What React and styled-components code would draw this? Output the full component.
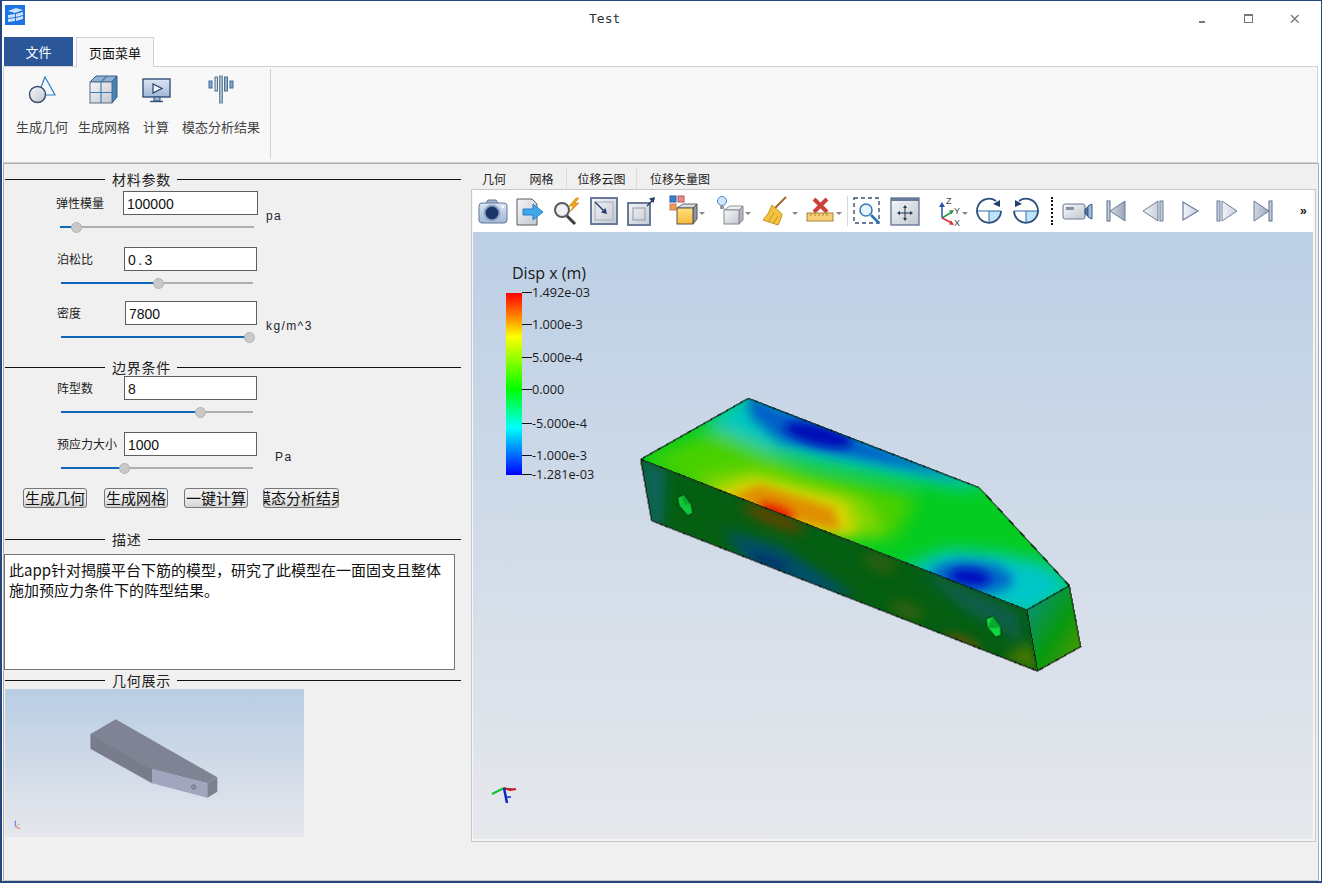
import React from "react";
import styled, { createGlobalStyle } from "styled-components";

const cjk = `"Noto Sans CJK SC", "Noto Sans", sans-serif`;

const Global = createGlobalStyle`
  html, body { margin: 0; padding: 0; background: #fff; overflow: hidden; }
  * { box-sizing: border-box; }
`;

const Win = styled.div`
  width: 1322px;
  height: 883px;
  border: 1px solid #24467c;
  border-bottom-width: 2px;
  border-left-width: 2px;
  background: #fff;
  display: flex;
  flex-direction: column;
  font-family: ${cjk};
  color: #111;
`;

const TitleBar = styled.div`
  height: 36px;
  flex: none;
  position: relative;
  display: flex;
  align-items: center;
  justify-content: flex-end;
`;

const AppLogo = styled.svg`
  position: absolute;
  left: 3px;
  top: 4px;
`;

const TitleText = styled.div`
  position: absolute;
  left: 587px;
  top: 10px;
  font: 13px "DejaVu Sans Mono", monospace;
  color: #333;
`;

const WinBtn = styled.div`
  width: 46px;
  height: 36px;
  display: flex;
  align-items: center;
  justify-content: center;
`;

const WinBtns = styled.div`
  display: flex;
  margin-right: 3px;
`;

const TabRow = styled.div`
  height: 30px;
  flex: none;
  display: flex;
  align-items: flex-end;
  padding-left: 2px;
  gap: 3px;
  margin-bottom: -1px;
`;

const FileTab = styled.div`
  width: 69px;
  height: 29px;
  margin-bottom: 1px;
  background: #2b579a;
  color: #fff;
  font-size: 13px;
  display: flex;
  align-items: center;
  justify-content: center;
`;

const PageTab = styled.div`
  width: 78px;
  height: 30px;
  background: #f8f8f8;
  border: 1px solid #d2d2d2;
  border-bottom: none;
  font-size: 13px;
  display: flex;
  align-items: center;
  justify-content: center;
  position: relative;
  z-index: 1;
`;

const Ribbon = styled.div`
  height: 97px;
  flex: none;
  margin: 0 3px 0 1px;
  background: #f8f8f8;
  border: 1px solid #d2d2d2;
  display: flex;
  padding: 2px 0 3px;
`;

const RibbonGroup = styled.div`
  width: 267px;
  border-right: 1px solid #d2d2d2;
  display: flex;
  padding-left: 7px;
`;

const RibbonBtn = styled.div`
  width: ${(p) => p.$w}px;
  display: flex;
  flex-direction: column;
  align-items: center;
  padding-top: 5px;
  font-size: 13px;
  line-height: 19px;
  color: #444;
  white-space: nowrap;
  svg { margin-bottom: 11px; }
`;

const Main = styled.div`
  flex: 1;
  margin: 0 2px 0 1px;
  background: #f0f0f0;
  border: 1px solid #adadad;
  border-bottom-color: #c8c8c8;
  display: flex;
  min-height: 0;
`;

const Left = styled.div`
  width: 467px;
  flex: none;
  padding-top: 7px;
  display: flex;
  flex-direction: column;
`;

const SectionHead = styled.div`
  height: 16px;
  flex: none;
  width: 456px;
  margin-left: 1px;
  margin-top: ${(p) => p.$top || 0}px;
  display: flex;
  align-items: center;
  font-size: 14px;
  letter-spacing: 0.75px;
  color: #222;
  &::before, &::after { content: ""; height: 1px; background: #111; }
  &::before { width: 100px; margin-right: 7px; }
  &::after { flex: 1; margin-left: 6px; }
`;

const Field = styled.div`
  margin-top: ${(p) => p.$top}px;
  padding-left: ${(p) => p.$left}px;
  display: flex;
  flex-direction: column;
`;

const FieldRow = styled.div`
  display: flex;
  height: 24px;
`;

const FieldLabel = styled.div`
  width: ${(p) => p.$w}px;
  font-size: 12px;
  line-height: 24px;
  color: #222;
  white-space: nowrap;
`;

const FieldInput = styled.input`
  width: ${(p) => p.$w}px;
  height: 24px;
  border: 1px solid #5e5e5e;
  background: #fff;
  padding: 1px 0 0 3px;
  font: 14px "Liberation Sans", sans-serif;
  color: #111;
  outline: none;
  letter-spacing: ${(p) => p.$track || 0}px;
`;

const Unit = styled.div`
  margin-left: ${(p) => p.$gap}px;
  padding-top: 18px;
  font: 12px "Liberation Sans", sans-serif;
  letter-spacing: 1.4px;
  color: #223;
  white-space: nowrap;
`;

const Slider = styled.div`
  width: ${(p) => p.$w}px;
  margin: 6px 0 0 ${(p) => p.$x}px;
  height: 12px;
  position: relative;
  display: flex;
  align-items: center;
`;

const Track = styled.div`
  height: 2px;
  width: 100%;
  background: #aeaeae;
`;

const Fill = styled.div`
  height: 100%;
  background: #0f67b9;
`;

const Knob = styled.div`
  position: absolute;
  top: 1px;
  width: 11px;
  height: 11px;
  margin-left: -5px;
  border-radius: 50%;
  background: #c9c9c9;
  border: 1px solid #b2b2b2;
`;

const Buttons = styled.div`
  display: flex;
  margin: 14px 0 0 19px;
`;

const PushBtn = styled.div`
  width: ${(p) => p.$w}px;
  margin-right: ${(p) => p.$gap}px;
  height: 20px;
  border: 1px solid #777;
  border-radius: 3px;
  background: linear-gradient(#efefef 40%, #d4d4d4);
  font-size: 15px;
  line-height: 18px;
  display: flex;
  justify-content: center;
  overflow: hidden;
  span { flex: none; white-space: nowrap; }
`;

const Desc = styled.div`
  margin: 7px 0 2px 0;
  width: 451px;
  height: 116px;
  flex: none;
  background: #fff;
  border: 1px solid #767676;
  padding: 5px 4px;
  font-size: 15px;
  line-height: 20px;
  white-space: nowrap;
`;

const Thumb = styled.svg`
  display: block;
  margin: 1px 0 0 1px;
  flex: none;
`;

const Right = styled.div`
  flex: 1;
  display: flex;
  flex-direction: column;
  padding-top: 3px;
`;

const ViewTabs = styled.div`
  height: 22px;
  flex: none;
  display: flex;
  font-size: 12px;
  color: #222;
`;

const ViewTab = styled.div`
  width: ${(p) => p.$w}px;
  display: flex;
  align-items: center;
  justify-content: center;
  border-right: ${(p) => (p.$sep ? "1px solid #dcdcdc" : "none")};
`;

const ViewFrame = styled.div`
  width: 845px;
  height: 653px;
  border: 1px solid #c8c8c8;
  background: #f6f6f6;
  padding: 0 2px 2px 1px;
  display: flex;
  flex-direction: column;
`;

const Toolbar = styled.div`
  height: 42px;
  flex: none;
  background: #fff;
  display: flex;
  align-items: center;
  padding-left: 2px;
`;

const ToolBtn = styled.div`
  width: ${(p) => p.$w}px;
  flex: none;
  display: flex;
  justify-content: center;
  align-items: center;
`;

const ToolSep = styled.div`
  width: 1px;
  height: 30px;
  background: #d8d8d8;
`;

const ToolDots = styled.div`
  width: 0;
  height: 28px;
  border-left: 2px dotted #111;
`;

const More = styled.div`
  margin-left: 19px;
  font: bold 12px "Liberation Sans", sans-serif;
`;

const Viewport = styled.div`
  flex: 1;
  position: relative;
  background: linear-gradient(#bccfe5, #e6e8ec);
  overflow: hidden;
`;

const Legend = styled.div`
  position: absolute;
  left: 33px;
  top: 33px;
  width: 110px;
  height: 225px;
  font-family: "Open Sans", sans-serif;
  color: #1a1a1a;
`;

const LegendTitle = styled.div`
  position: absolute;
  left: 6px;
  top: -1px;
  font-size: 16px;
  line-height: 18px;
  white-space: nowrap;
`;

const LegendBar = styled.div`
  position: absolute;
  left: 0;
  top: 28px;
  width: 16px;
  height: 182px;
  background: linear-gradient(#ff0000 0%, #ff9000 14%, #ffff00 24%, #00ff00 53%, #00ffff 74%, #0000ff 100%);
`;

const LegendTick = styled.div`
  position: absolute;
  left: 16px;
  display: flex;
  align-items: center;
  height: 14px;
  margin-top: -8px;
  font-size: 12.7px;
  white-space: nowrap;
  &::before { content: ""; width: 10px; height: 1px; background: #111; }
`;

const Model = styled.svg`
  position: absolute;
  left: 157px;
  top: 158px;
`;

const Triad = styled.svg`
  position: absolute;
  left: 17px;
  top: 552px;
`;

const GradDefs = styled.svg`
  position: absolute;
  width: 0;
  height: 0;
`;

const IconLetter = styled.text`
  font: 9px "Liberation Sans", sans-serif;
  fill: #444;
`;

const caret = (x) => <path d={`M${x} 17h6l-3 3z`} fill="#888" />;

const icons = {
  camera: (
    <>
      <path d="M9 8l2-3h8l2 3" fill="#9fb2cf" stroke="#66789a" />
      <rect x="2" y="8" width="28" height="20" rx="3" fill="url(#gBlue)" stroke="#62779b" />
      <circle cx="15" cy="18" r="7.5" fill="#1b3768" stroke="#8fa6c8" strokeWidth="2" />
      <circle cx="26" cy="12" r="1.3" fill="#fff" />
    </>
  ),
  exportFile: (
    <>
      <path d="M3 4h15l5 5v21H3z" fill="url(#gGray)" stroke="#5a5a5a" />
      <path d="M9 14h10V9l10 8-10 8v-5H9z" fill="#3fa8ea" stroke="#2b7fc4" />
    </>
  ),
  zoomBolt: (
    <>
      <circle cx="11" cy="15" r="7" fill="#eef2f6" stroke="#5a5a5a" strokeWidth="2" />
      <path d="M16 21l8 8" stroke="#3a3a3a" strokeWidth="3" />
      <path d="M25 3l-7 8h4l-3 6 9-9h-4l4-5z" fill="#f0a21d" stroke="#c97e10" strokeWidth=".5" />
    </>
  ),
  fit: (
    <>
      <rect x="3" y="3" width="26" height="26" fill="url(#gGray)" stroke="#68799a" strokeWidth="2" />
      <rect x="7" y="7" width="18" height="18" fill="none" stroke="#a4aebb" />
      <path d="M7 7l10 10" stroke="#233f6f" strokeWidth="1.4" />
      <path d="M19 19l-6-1.500 4.500-4.500z" fill="#233f6f" />
    </>
  ),
  fitOut: (
    <>
      <rect x="3" y="8" width="22" height="22" fill="url(#gGray)" stroke="#68799a" strokeWidth="2" />
      <rect x="8" y="13" width="12" height="12" fill="none" stroke="#8e99a8" />
      <path d="M22 11l7-7" stroke="#233f6f" strokeWidth="1.4" />
      <path d="M30 2l-1.500 6-4.500-4.500z" fill="#233f6f" />
    </>
  ),
  boxColor: (
    <>
      <rect x="2" y="1" width="6" height="6" fill="#3d7fd0" stroke="#2a5f9f" />
      <rect x="10" y="1" width="6" height="6" fill="#e58a8a" stroke="#b55" />
      <rect x="2" y="9" width="6" height="6" fill="#f0a040" stroke="#c77" />
      <path d="M9 13h16l4-4H15z" fill="#d8dde4" stroke="#666" />
      <path d="M25 13l4-4v15l-4 5z" fill="#8d97a6" stroke="#555" />
      <rect x="9" y="13" width="16" height="16" fill="url(#gYellow)" stroke="#555" />
      {caret(31)}
    </>
  ),
  boxLight: (
    <>
      <circle cx="7" cy="6" r="4.500" fill="#cfe6fa" stroke="#4a86c5" />
      <path d="M5 11h4v3H5z" fill="#999" />
      <path d="M9 15h15l4-4H15z" fill="#eceff3" stroke="#999" />
      <path d="M24 15l4-4v14l-4 4z" fill="#b0b6bf" stroke="#888" />
      <rect x="9" y="15" width="15" height="14" fill="url(#gGray)" stroke="#888" />
      {caret(30)}
    </>
  ),
  broom: (
    <>
      <path d="M26 2L15 13" stroke="#9c6a2c" strokeWidth="2" />
      <path d="M12 10l10 9q-1 7-4 11L3 25q6-6 9-15z" fill="#f3c33f" stroke="#c79420" />
      <path d="M8 27l6-9M13 29l5-8" stroke="#c79420" />
      {caret(32)}
    </>
  ),
  ruler: (
    <>
      <path d="M9 4l13 13M22 4L9 17" stroke="#c9403c" strokeWidth="4" />
      <rect x="2" y="18" width="26" height="8" fill="#f4cf78" stroke="#a98432" />
      <path d="M6 18v3M10 18v3M14 18v3M18 18v3M22 18v3" stroke="#a98432" />
      {caret(31)}
    </>
  ),
  zoomBox: (
    <>
      <rect x="2" y="3" width="25" height="25" fill="none" stroke="#3b4f75" strokeWidth="1.400" strokeDasharray="4 3" />
      <circle cx="14" cy="15" r="6" fill="#e9f2fb" stroke="#3a7cba" strokeWidth="1.600" />
      <path d="M19 20l8 8" stroke="#2772b4" strokeWidth="2.500" />
    </>
  ),
  pan: (
    <>
      <rect x="2" y="3" width="28" height="27" fill="url(#gGray)" stroke="#68799a" strokeWidth="1.4" />
      <rect x="2" y="3" width="28" height="3" fill="#68799a" />
      <path d="M16 12v12M10 18h12" stroke="#1f3553" />
      <path d="M16 10l2 3h-4zM16 26l2-3h-4zM8 18l3-2v4zM24 18l-3-2v4z" fill="#1f3553" />
    </>
  ),
  triad: (
    <>
      <path d="M8 23V10" stroke="#2554a8" strokeWidth="1.5" />
      <path d="M8 7l3 5H5z" fill="#2554a8" />
      <path d="M8 23l10-6" stroke="#2c9a49" strokeWidth="1.5" />
      <path d="M20 15l-5 .5 2.500 4z" fill="#2c9a49" />
      <path d="M8 23l10 5" stroke="#d9303a" strokeWidth="1.500" />
      <path d="M20 30l-5-.5 2.200-4z" fill="#d9303a" />
      <IconLetter x="12" y="9">Z</IconLetter>
      <IconLetter x="20" y="19">Y</IconLetter>
      <IconLetter x="20" y="31">X</IconLetter>
      <path d="M28 17h6l-3 3z" fill="#888" />
    </>
  ),
  rotCw: (
    <>
      <path d="M16 16V28A12 12 0 0 0 28 16z" fill="#bfe3f7" />
      <path d="M4 16h24M16 16v12" stroke="#2f6aa6" />
      <path d="M23 6A12 12 0 1 0 28 16" fill="none" stroke="#2c4f7f" strokeWidth="1.800" />
      <path d="M27 5v7l-7-3z" fill="#1f3f6e" />
    </>
  ),
  rotCcw: (
    <>
      <path d="M16 16V28A12 12 0 0 0 28 16z" fill="#bfe3f7" />
      <path d="M4 16h24M16 16v12" stroke="#2f6aa6" />
      <path d="M9 6A12 12 0 1 1 4 16" fill="none" stroke="#2c4f7f" strokeWidth="1.800" />
      <path d="M5 5v7l7-3z" fill="#1f3f6e" />
    </>
  ),
  video: (
    <>
      <rect x="1" y="9" width="22" height="15" rx="2" fill="url(#gGray)" stroke="#68799a" />
      <rect x="4" y="12" width="8" height="3" fill="#8490a2" />
      <path d="M23 14l3-2v9l-3-2z" fill="#51729f" stroke="#3d5a85" />
      <path d="M26 11l4-2v15l-4-2z" fill="#9fc0de" stroke="#3d5a85" />
    </>
  ),
  first: (
    <>
      <rect x="7" y="6" width="3" height="20" fill="#c6cfdc" stroke="#5d6f8f" />
      <path d="M25 6v20L10 16z" fill="url(#gSteel)" stroke="#6b7d9b" />
    </>
  ),
  prev: (
    <>
      <path d="M21 6v20L6 16z" fill="url(#gPale)" stroke="#6b7d9b" />
      <rect x="23" y="6" width="3" height="20" fill="#c6cfdc" stroke="#6b7d9b" />
    </>
  ),
  play: <path d="M8 7v18l15-9z" fill="url(#gPale)" stroke="#6b7d9b" strokeWidth="1.200" />,
  next: (
    <>
      <rect x="6" y="6" width="3" height="20" fill="#c6cfdc" stroke="#6b7d9b" />
      <path d="M11 6v20l15-10z" fill="url(#gPale)" stroke="#6b7d9b" />
    </>
  ),
  last: (
    <>
      <path d="M6 6v20l15-10z" fill="url(#gSteel)" stroke="#6b7d9b" />
      <rect x="21" y="6" width="3" height="20" fill="#c6cfdc" stroke="#5d6f8f" />
    </>
  ),
};

const tools = [
  ["camera", 36], ["exportFile", 38], ["zoomBolt", 36], ["fit", 38], ["fitOut", 36],
  ["boxColor", 50], ["boxLight", 44], ["broom", 46], ["ruler", 44], ["sep", 8],
  ["zoomBox", 34], ["pan", 40], ["triad", 50], ["rotCw", 28], ["rotCcw", 46],
  ["dots", 6], ["video", 46], ["first", 30], ["prev", 44], ["play", 32], ["next", 40], ["last", 34],
];

const ticks = [
  ["1.492e-03", 0], ["1.000e-3", 32], ["5.000e-4", 65], ["0.000", 97],
  ["-5.000e-4", 131], ["-1.000e-3", 163], ["-1.281e-03", 182],
];

const SliderBar = ({ w, x, pos }) => (
  <Slider $w={w} $x={x}>
    <Track>
      <Fill style={{ width: `${pos * 100}%` }} />
    </Track>
    <Knob style={{ left: `${pos * 100}%` }} />
  </Slider>
);

const CaeModel = () => (
  <Model width="460" height="290" viewBox="0 0 1380 870">
    <defs>
      <clipPath id="topFace"><path d="M32 208L355 25 1048 293 1318 587 1190 660z" /></clipPath>
      <clipPath id="frontFace"><path d="M32 208L1190 660 1222 843 65 392z" /></clipPath>
      <filter id="b30" x="-40%" y="-40%" width="180%" height="180%"><feGaussianBlur stdDeviation="26" /></filter>
      <filter id="b18" x="-40%" y="-40%" width="180%" height="180%"><feGaussianBlur stdDeviation="18" /></filter>
      <filter id="b10" x="-40%" y="-40%" width="180%" height="180%"><feGaussianBlur stdDeviation="12" /></filter>
      <linearGradient id="endGrad" x1="0" y1="0" x2="1" y2="1">
        <stop offset="0" stopColor="#0b8f8f" />
        <stop offset=".55" stopColor="#089a10" />
        <stop offset="1" stopColor="#5f9800" />
      </linearGradient>
    </defs>
    <g clipPath="url(#topFace)">
      <rect width="1380" height="870" fill="#04cc20" />
      <g filter="url(#b30)">
        <path d="M40 210L280 110 520 240 860 320 800 440 600 440 280 340z" fill="#48d000" />
        <path d="M180 280L380 240 700 330 760 440 600 440z" fill="#90d800" />
        <path d="M220 100L355 0 1060 270 1030 300 800 260 580 220 400 175z" fill="#00c8c0" />
        <path d="M800 540L950 480 1100 490 1250 520 1340 590 1190 690z" fill="#00c8c8" />
      </g>
      <g filter="url(#b18)">
        <path d="M350 10L1010 270 800 228 600 190 450 155 360 80z" fill="#0060c8" />
        <ellipse cx="1025" cy="562" rx="125" ry="50" transform="rotate(4 1025 562)" fill="#0068c8" />
        <path d="M220 310L370 265 650 335 680 430 560 430z" fill="#d4d400" />
      </g>
      <g filter="url(#b10)">
        <path d="M300 320L390 285 610 355 630 420 520 400z" fill="#e09000" />
        <ellipse cx="565" cy="135" rx="105" ry="30" transform="rotate(14 565 135)" fill="#000fb8" />
        <ellipse cx="1020" cy="562" rx="62" ry="25" transform="rotate(6 1020 562)" fill="#000fc0" />
        <ellipse cx="440" cy="362" rx="62" ry="22" transform="rotate(20 440 362)" fill="#e80a00" />
      </g>
    </g>
    <g clipPath="url(#frontFace)">
      <rect width="1380" height="870" fill="#055f12" />
      <g filter="url(#b18)">
        <path d="M30 200L110 240 100 420 50 400z" fill="#0a6458" />
        <path d="M280 420L450 470 680 620 560 610 350 520z" fill="#06506a" />
        <ellipse cx="430" cy="385" rx="100" ry="20" transform="rotate(22 430 385)" fill="#6a4205" />
        <ellipse cx="750" cy="520" rx="50" ry="26" transform="rotate(22 750 520)" fill="#2a5f0a" />
        <ellipse cx="830" cy="660" rx="50" ry="20" transform="rotate(22 830 660)" fill="#39600a" />
        <path d="M860 530L1000 590 1160 660 1180 760 1000 660z" fill="#0a5f48" />
        <path d="M1120 800L1230 850 1200 760z" fill="#4a7a00" />
      </g>
      <g filter="url(#b10)">
        <ellipse cx="420" cy="515" rx="60" ry="10" transform="rotate(22 420 515)" fill="#02286e" />
        <ellipse cx="1000" cy="752" rx="60" ry="9" transform="rotate(22 1000 752)" fill="#824a04" />
      </g>
    </g>
    <path d="M1190 660L1318 587 1352 770 1222 843z" fill="url(#endGrad)" />
    <path d="M142 322l20-8 22 30 5 25-16 8-26-30z" fill="#10c83a" stroke="#06300c" strokeWidth="3" />
    <path d="M155 314l8 30 20-2z" fill="#0aa82c" />
    <path d="M1068 686l22-8 22 34 1 24-16 5-26-30z" fill="#10d840" stroke="#06300c" strokeWidth="3" />
    <path d="M1073 715l40-3-25-34z" fill="#0aa82c" />
    <path
      d="M32 208L355 25 1048 293 1318 587 1352 770 1222 843 65 392zM32 208L1190 660 1318 587M1190 660L1222 843"
      fill="none"
      stroke="#000"
      strokeWidth="3"
      shapeRendering="crispEdges"
    />
  </Model>
);

const ThumbPicture = () => (
  <Thumb width="299" height="148" viewBox="15 57 897 444">
    <defs>
      <linearGradient id="thumbBg" x1="0" y1="0" x2="0" y2="1">
        <stop offset="0" stopColor="#b9cde4" />
        <stop offset="1" stopColor="#e6e7ec" />
      </linearGradient>
    </defs>
    <rect x="15" y="57" width="897" height="444" fill="url(#thumbBg)" />
    <path d="M272 192L347 148 652 322 622 340 457 298z" fill="#7f8394" />
    <path d="M272 192L457 298V340L272 236z" fill="#797c8c" stroke="#6b6e7c" />
    <path d="M457 298L622 340V383L457 340z" fill="#a1a5bd" />
    <path d="M622 340L652 322V365L622 383z" fill="#7d8091" />
    <circle cx="581" cy="351" r="6.500" fill="#8f93a8" stroke="#5d6070" strokeWidth="2" />
    <path d="M46 452v18" stroke="#5a6de0" strokeWidth="3" />
    <path d="M46 470l14 6" stroke="#e88" strokeWidth="4" />
    <path d="M46 470l12-8" stroke="#9c9" strokeWidth="3" />
  </Thumb>
);

const App = () => (
  <Win>
    <Global />
    <GradDefs>
      <defs>
        <linearGradient id="gBlue" x1="0" y1="0" x2="0" y2="1">
          <stop offset="0" stopColor="#dbe6f4" />
          <stop offset="1" stopColor="#9fb7d8" />
        </linearGradient>
        <linearGradient id="gGray" x1="0" y1="0" x2="1" y2="1">
          <stop offset="0" stopColor="#f5f6f8" />
          <stop offset="1" stopColor="#c2c8d0" />
        </linearGradient>
        <linearGradient id="gYellow" x1="0" y1="0" x2="0" y2="1">
          <stop offset="0" stopColor="#ffe27a" />
          <stop offset="1" stopColor="#f8b93a" />
        </linearGradient>
        <linearGradient id="gSteel" x1="0" y1="0" x2="1" y2="0">
          <stop offset="0" stopColor="#d2d8e2" />
          <stop offset="1" stopColor="#9aa6b8" />
        </linearGradient>
        <linearGradient id="gPale" x1="0" y1="0" x2="1" y2="0">
          <stop offset="0" stopColor="#f2f4f8" />
          <stop offset="1" stopColor="#c8d0dc" />
        </linearGradient>
      </defs>
    </GradDefs>

    <TitleBar>
      <AppLogo width="20" height="20" viewBox="0 0 20 20">
        <rect width="20" height="20" fill="#1b74e4" />
        <path d="M3 6l8-3 7 2-8 3zM3 10l7-1v3l-7 1zM11 9l7-2v3l-7 2zM3 14l7-1v3l-7 1zM11 13l7-2v3l-7 2z" fill="#cfe2fb" />
      </AppLogo>
      <TitleText>Test</TitleText>
      <WinBtns>
        <WinBtn>
          <svg width="10" height="10" viewBox="0 0 10 10"><rect x="1" y="7" width="6" height="2" fill="#777" /></svg>
        </WinBtn>
        <WinBtn>
          <svg width="10" height="10" viewBox="0 0 10 10"><rect x=".5" y=".5" width="8" height="8" fill="none" stroke="#777" /><rect x="0" y="0" width="9" height="2" fill="#777" /></svg>
        </WinBtn>
        <WinBtn>
          <svg width="10" height="10" viewBox="0 0 10 10"><path d="M1 1l7.500 7.500M8.500 1L1 8.500" stroke="#777" strokeWidth="1.300" /></svg>
        </WinBtn>
      </WinBtns>
    </TitleBar>

    <TabRow>
      <FileTab>文件</FileTab>
      <PageTab>页面菜单</PageTab>
    </TabRow>

    <Ribbon>
      <RibbonGroup>
        <RibbonBtn $w={62}>
          <svg width="32" height="32" viewBox="0 0 32 32">
            <path d="M19 3l10 18H12z" fill="#f3f7fb" stroke="#2a80bd" strokeWidth="1.200" />
            <circle cx="11.500" cy="20.500" r="8" fill="url(#gGray)" stroke="#3a4a6b" strokeWidth="1.400" />
          </svg>
          生成几何
        </RibbonBtn>
        <RibbonBtn $w={62}>
          <svg width="32" height="32" viewBox="0 0 32 32">
            <path d="M8 2h21l-5 6H2z" fill="#8fb2d2" stroke="#3a5a80" />
            <path d="M24 8l5-6v21l-5 6z" fill="#4f8ab8" stroke="#2a5a88" />
            <rect x="2" y="8" width="22" height="21" fill="url(#gGray)" stroke="#5b6f85" />
            <path d="M13 8v21M2 18.500h22M19 2l-6 6M27 4.500v21" stroke="#3f7eb0" strokeWidth="1.200" />
          </svg>
          生成网格
        </RibbonBtn>
        <RibbonBtn $w={42}>
          <svg width="32" height="32" viewBox="0 0 32 32">
            <rect x="3" y="5" width="27" height="18" fill="url(#gBlue)" stroke="#34507a" strokeWidth="1.400" />
            <path d="M13 10v9l9-4.500z" fill="#eef4fb" stroke="#2d3f63" strokeWidth="1.200" />
            <path d="M14 23h6v4h-6z" fill="#9fb2cf" stroke="#34507a" />
            <path d="M10 27.500h13" stroke="#34507a" strokeWidth="1.400" />
          </svg>
          计算
        </RibbonBtn>
        <RibbonBtn $w={88}>
          <svg width="32" height="32" viewBox="0 0 32 32">
            <rect x="4" y="7" width="3" height="7" fill="#7fa8cc" stroke="#3f6f9b" />
            <rect x="10" y="3" width="2.500" height="14" fill="#c8d8e6" stroke="#53708c" />
            <rect x="14.500" y="2" width="3" height="27" fill="#9db8c8" stroke="#6b8a9a" />
            <rect x="19.500" y="3" width="3" height="14" fill="#8fb0cc" stroke="#53708c" />
            <rect x="25" y="7" width="3" height="7" fill="#7fa8cc" stroke="#3f6f9b" />
          </svg>
          模态分析结果
        </RibbonBtn>
      </RibbonGroup>
    </Ribbon>

    <Main>
      <Left>
        <SectionHead>材料参数</SectionHead>
        <Field $top={4} $left={52}>
          <FieldRow>
            <FieldLabel $w={67}>弹性模量</FieldLabel>
            <FieldInput $w={135} readOnly value="100000" />
            <Unit $gap={8}>pa</Unit>
          </FieldRow>
          <SliderBar w={194} x={4} pos={0.08} />
        </Field>
        <Field $top={14} $left={53}>
          <FieldRow>
            <FieldLabel $w={67}>泊松比</FieldLabel>
            <FieldInput $w={133} $track={2.400} readOnly value="0.3" />
          </FieldRow>
          <SliderBar w={192} x={4} pos={0.505} />
        </Field>
        <Field $top={12} $left={53}>
          <FieldRow>
            <FieldLabel $w={68}>密度</FieldLabel>
            <FieldInput $w={132} readOnly value="7800" />
            <Unit $gap={9}>kg/m^3</Unit>
          </FieldRow>
          <SliderBar w={192} x={4} pos={0.98} />
        </Field>

        <SectionHead $top={16}>边界条件</SectionHead>
        <Field $top={1} $left={53}>
          <FieldRow>
            <FieldLabel $w={67}>阵型数</FieldLabel>
            <FieldInput $w={133} readOnly value="8" />
          </FieldRow>
          <SliderBar w={192} x={4} pos={0.725} />
        </Field>
        <Field $top={14} $left={53}>
          <FieldRow>
            <FieldLabel $w={67}>预应力大小</FieldLabel>
            <FieldInput $w={133} readOnly value="1000" />
            <Unit $gap={18}>Pa</Unit>
          </FieldRow>
          <SliderBar w={192} x={4} pos={0.33} />
        </Field>

        <Buttons>
          <PushBtn $w={64} $gap={17}><span>生成几何</span></PushBtn>
          <PushBtn $w={64} $gap={16}><span>生成网格</span></PushBtn>
          <PushBtn $w={64} $gap={15}><span>一键计算</span></PushBtn>
          <PushBtn $w={76} $gap={0}><span>模态分析结果</span></PushBtn>
        </Buttons>

        <SectionHead $top={23}>描述</SectionHead>
        <Desc>
          此app针对揭膜平台下筋的模型，研究了此模型在一面固支且整体
          <br />
          施加预应力条件下的阵型结果。
        </Desc>
        <SectionHead>几何展示</SectionHead>
        <ThumbPicture />
      </Left>

      <Right>
        <ViewTabs>
          <ViewTab $w={46}>几何</ViewTab>
          <ViewTab $w={50} $sep>网格</ViewTab>
          <ViewTab $w={70} $sep>位移云图</ViewTab>
          <ViewTab $w={86}>位移矢量图</ViewTab>
        </ViewTabs>
        <ViewFrame>
          <Toolbar>
            {tools.map(([name, w]) => (
              <ToolBtn key={name} $w={w}>
                {name === "sep" && <ToolSep />}
                {name === "dots" && <ToolDots />}
                {icons[name] && (
                  <svg width="32" height="32" viewBox="0 0 32 32" overflow="visible">{icons[name]}</svg>
                )}
              </ToolBtn>
            ))}
            <More>»</More>
          </Toolbar>
          <Viewport>
            <Legend>
              <LegendTitle>Disp x (m)</LegendTitle>
              <LegendBar />
              {ticks.map(([text, y]) => (
                <LegendTick key={text} style={{ top: 28 + y }}>{text}</LegendTick>
              ))}
            </Legend>
            <CaeModel />
            <Triad width="30" height="24" viewBox="0 0 30 24">
              <path d="M14 4L2 10" stroke="#10c030" strokeWidth="2" />
              <path d="M14 4l6 2 6-1" stroke="#d81020" strokeWidth="2" />
              <path d="M14 4l3 15" stroke="#1028c8" strokeWidth="2.500" />
              <path d="M17 13h4" stroke="#1028c8" strokeWidth="1.500" />
            </Triad>
          </Viewport>
        </ViewFrame>
      </Right>
    </Main>
  </Win>
);

export default App;
